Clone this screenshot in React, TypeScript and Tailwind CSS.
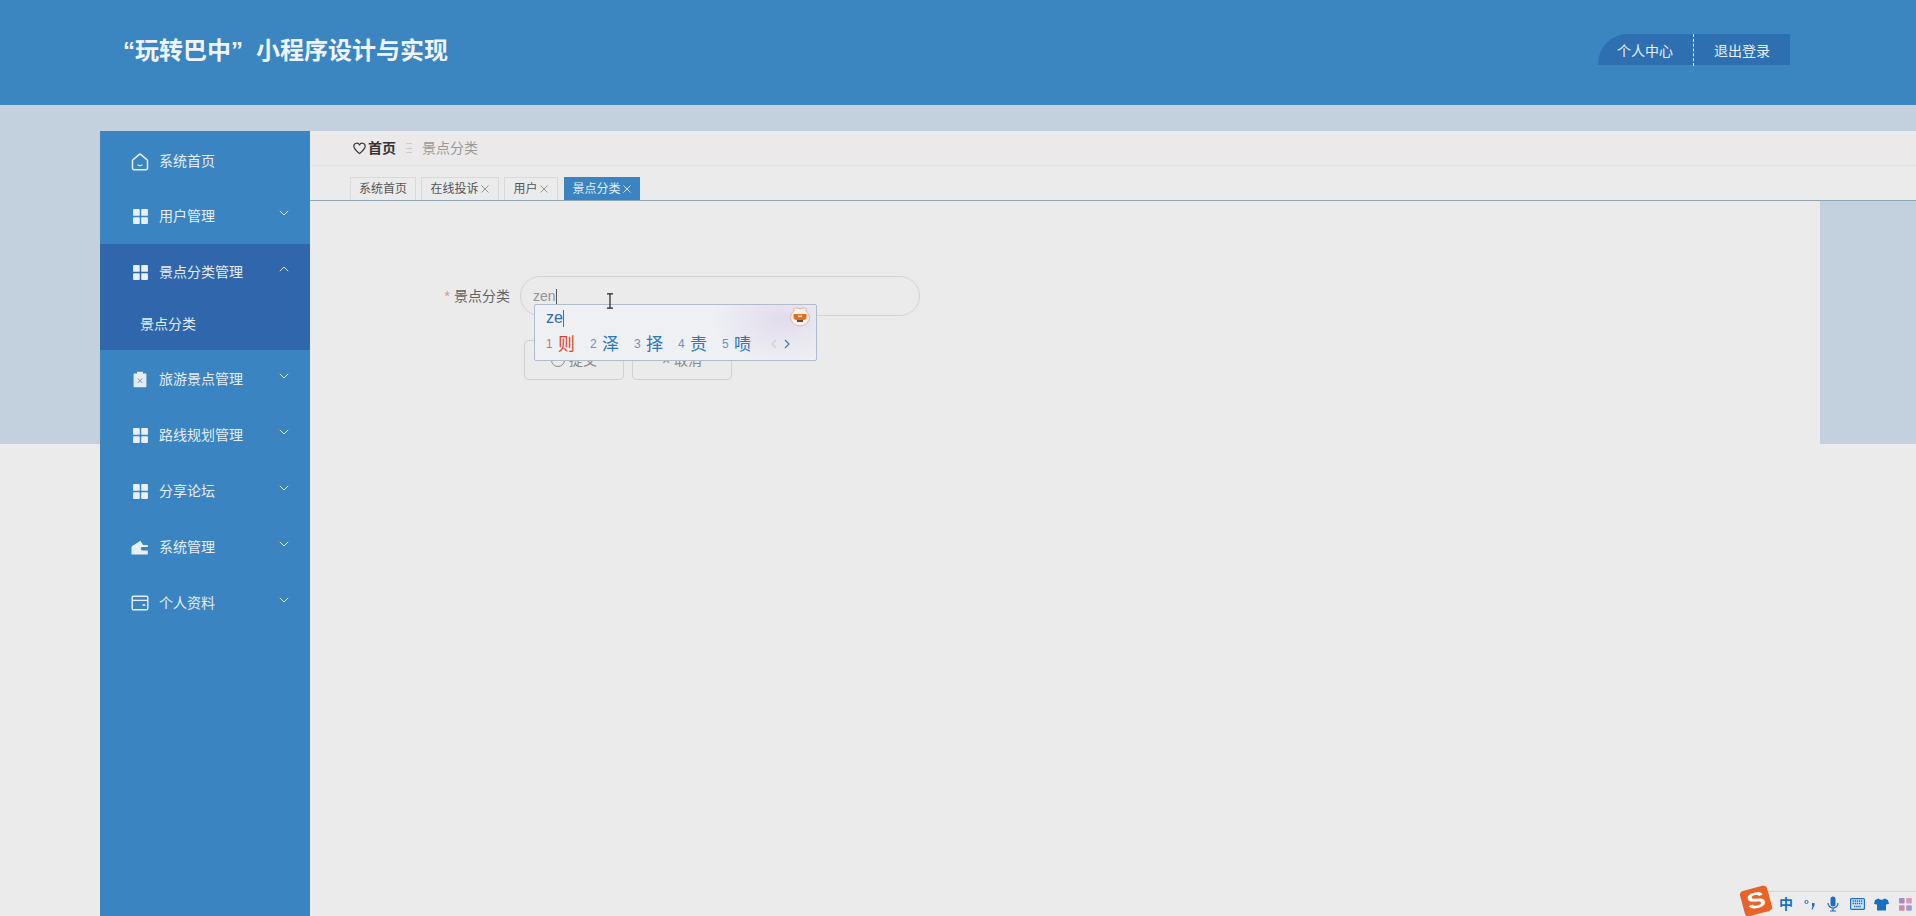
import React from "react";

const FONT = "font-['Liberation_Sans','Noto_Sans_CJK_SC',sans-serif]";

function Grid() {
  return (
    <svg width="17" height="17" viewBox="0 0 16 16" fill="#e8eff6">
      <rect x="1" y="1" width="6.3" height="6.3" rx="0.8" />
      <rect x="8.7" y="1" width="6.3" height="6.3" rx="0.8" />
      <rect x="1" y="8.7" width="6.3" height="6.3" rx="0.8" />
      <rect x="8.7" y="8.7" width="6.3" height="6.3" rx="0.8" />
    </svg>
  );
}
function Home() {
  return (
    <svg width="18" height="18" viewBox="0 0 18 18" fill="none" stroke="#e8eff6" strokeWidth="1.5" strokeLinejoin="round">
      <path d="M8 1.6 a1.5 1.5 0 0 1 2 0 L16 6.8 a1.6 1.6 0 0 1 0.5 1.2 V15 a1.8 1.8 0 0 1 -1.8 1.8 H3.3 A1.8 1.8 0 0 1 1.5 15 V8 a1.6 1.6 0 0 1 0.5 -1.2 Z" />
      <path d="M7 12 q2 1.4 4 0" strokeLinecap="round" strokeWidth="1.2" />
    </svg>
  );
}
function Clip() {
  return (
    <svg width="16" height="17" viewBox="0 0 16 17">
      <path fill="#e4ecf4" d="M5 0.8 h6 v1.7 h2.6 a0.8 0.8 0 0 1 0.8 0.8 v12.2 a0.8 0.8 0 0 1 -0.8 0.8 h-11.2 a0.8 0.8 0 0 1 -0.8 -0.8 v-12.2 a0.8 0.8 0 0 1 0.8 -0.8 H5 Z" />
      <path stroke="#6d93b8" strokeWidth="1" d="M5.8 7.5 l4.4 4.4 M10.2 7.5 l-4.4 4.4" />
    </svg>
  );
}
function Wallet() {
  return (
    <svg width="18" height="15" viewBox="0 0 18 15">
      <path fill="#e8eff6" d="M0.5 14.5 V7.5 Q0.5 6 2 5.5 L9.5 0.8 L12 5 H16.8 V7 H11.5 a1.7 1.7 0 0 0 0 3.6 H16.8 V14.5 Z" />
    </svg>
  );
}
function Card() {
  return (
    <svg width="18" height="16" viewBox="0 0 18 16" fill="none" stroke="#e8eff6" strokeWidth="1.4">
      <rect x="1.2" y="1.2" width="15.6" height="13.6" rx="1.4" />
      <path d="M1.2 5.4 H16.8 M11.5 10 h2.8" />
    </svg>
  );
}
function Chev({ up = false }: { up?: boolean }) {
  return (
    <svg width="10" height="6" viewBox="0 0 10 6" fill="none" stroke="#dfe9f3" strokeWidth="1">
      <path d={up ? "M0.8 5.2 L5 1 L9.2 5.2" : "M0.8 0.8 L5 5 L9.2 0.8"} />
    </svg>
  );
}

function Row({ icon, label, chev, up, h = "h-[56px]" }: { icon: React.ReactNode; label: string; chev?: boolean; up?: boolean; h?: string }) {
  return (
    <div className={`flex items-center pl-[31px] pr-[21px] ${h}`}>
      <span className="flex w-[18px] justify-center">{icon}</span>
      <span className="ml-[10px] flex-1 text-[14px] text-[#e6eef5]">{label}</span>
      {chev && (
        <span className="mb-[7px] flex">
          <Chev up={up} />
        </span>
      )}
    </div>
  );
}

function Tab({ label, close, active, w }: { label: string; close?: boolean; active?: boolean; w: string }) {
  return (
    <div
      className={`flex h-[23px] items-center justify-center gap-[1px] border border-b-0 text-[12px] ${w} ${
        active ? "border-[#3a84c1] bg-[#3a84c1] text-[#e6eef5]" : "border-[#d9d9d9] bg-[#ebebeb] text-[#555]"
      }`}
    >
      <span>{label}</span>
      {close && (
        <svg width="10" height="10" viewBox="0 0 10 10" fill="none" stroke={active ? "#e6eef5" : "#888"} strokeWidth="0.9">
          <path d="M1.5 1.5 L8.5 8.5 M8.5 1.5 L1.5 8.5" />
        </svg>
      )}
    </div>
  );
}

function Cand({ n, c, red }: { n: number; c: string; red?: boolean }) {
  return (
    <span className="flex w-[44px] items-center">
      <span className={`w-[12px] text-[12px] ${red ? "text-[#d9705f]" : "text-[#6a93bd]"}`}>{n}</span>
      <span className={`text-[17px] leading-none ${red ? "text-[#d8402c]" : "text-[#2b78ba]"}`}>{c}</span>
    </span>
  );
}

export default function App() {
  return (
    <div className={`relative h-[916px] overflow-hidden bg-[linear-gradient(#c3d0de_444px,#ebebeb_444px)] ${FONT}`}>
      <header className="flex h-[105px] items-center justify-between bg-[#3b85c1] pl-[123px] pr-[126px]">
        <h1 className="mb-[3px] flex text-[24px] font-bold text-[#f0f4f8]">
          <span>“玩转巴中”</span>
          <span className="ml-[13px]">小程序设计与实现</span>
        </h1>
        <div className="mb-[6px] flex h-[31px] items-center rounded-tl-[30px] bg-[#2d6fb0] text-[14px] text-[#e9f0f7]">
          <span className="flex h-[32px] w-[95px] items-center justify-end pr-[20px] pt-[3px]">个人中心</span>
          <span className="h-[32px] border-l border-dashed border-[#e9f0f7]" />
          <span className="flex w-[96px] justify-center pt-[3px]">退出登录</span>
        </div>
      </header>

      <div className="flex pl-[100px] pt-[26px]">
        <aside className="h-[785px] w-[210px] shrink-0 bg-[#3a84c1] pt-[3px]">
          <Row icon={<Home />} label="系统首页" h="h-[55px]" />
          <Row icon={<Grid />} label="用户管理" chev h="h-[55px]" />
          <div className="h-[106px] bg-[#3066ac]">
            <Row icon={<Grid />} label="景点分类管理" chev up h="h-[57px]" />
            <div className="flex h-[49px] items-center pb-[2px] pl-[40px] text-[14px] text-[#e6eef5]">景点分类</div>
          </div>
          <div className="pt-[1px]">
            <Row icon={<Clip />} label="旅游景点管理" chev />
            <Row icon={<Grid />} label="路线规划管理" chev />
            <Row icon={<Grid />} label="分享论坛" chev />
            <Row icon={<Wallet />} label="系统管理" chev />
            <Row icon={<Card />} label="个人资料" chev />
          </div>
        </aside>

        <main className="flex h-[785px] flex-1 flex-col">
          <div className="flex h-[35px] items-center border-b border-[#e2e2e2] bg-[#ebe9e9] pl-[43px] text-[14px]">
            <svg width="13" height="13" viewBox="0 0 24 24" fill="none" stroke="#333" strokeWidth="2.2" strokeLinejoin="round">
              <path d="M12 21.5 C4 15 1.5 11.5 1.5 7.5 A5.5 5.5 0 0 1 12 5.5 A5.5 5.5 0 0 1 22.5 7.5 C22.5 11.5 20 15 12 21.5 Z" />
            </svg>
            <span className="ml-[2px] font-bold text-[#333]">首页</span>
            <span className="ml-[10px] flex h-[10px] w-[6px] flex-col justify-between">
              <span className="h-px bg-[#ccc]" />
              <span className="h-px bg-[#ccc]" />
              <span className="h-px bg-[#ccc]" />
            </span>
            <span className="ml-[10px] text-[#999]">景点分类</span>
          </div>
          <div className="flex h-[35px] items-end border-b border-b-[#8fa6b9] bg-[#ebebeb] pl-[40px]">
            <Tab label="系统首页" w="w-[66px]" />
            <span className="w-[5px]" />
            <Tab label="在线投诉" close w="w-[78px]" />
            <span className="w-[5px]" />
            <Tab label="用户" close w="w-[54px]" />
            <span className="w-[6px]" />
            <Tab label="景点分类" close active w="w-[76px]" />
          </div>
          <div className="w-[1510px] flex-1 bg-[#ebebeb] pt-[75px]">
            <div className="flex h-[40px] items-center">
              <div className="w-[210px] pr-[10px] text-right text-[14px] text-[#606266]">
                <span className="mr-[4px] text-[#e88]">*</span>景点分类
              </div>
              <div className="flex h-[40px] w-[400px] items-center rounded-full border border-[#d4d4d4] pl-[12px] text-[14px] text-[#909399]">
                zen<span className="h-[15px] w-px bg-[#555]" />
              </div>
            </div>
            <div className="mt-[24px] flex gap-[8px] pl-[214px]">
              <div className="flex h-[40px] w-[100px] items-center justify-center gap-[4px] rounded-[4px] border border-[#d2d2d2] text-[14px] text-[#888]">
                <span className="h-[14px] w-[14px] rounded-full border border-[#888]" />提交
              </div>
              <div className="flex h-[40px] w-[100px] items-center justify-center gap-[4px] rounded-[4px] border border-[#d2d2d2] text-[14px] text-[#888]">
                <span>×</span>取消
              </div>
            </div>
          </div>
        </main>
      </div>

      {/* Input method candidate window */}
      <div className="absolute left-[534px] top-[304px] h-[57px] w-[283px] rounded-[2px] border border-[#aebccc] bg-[radial-gradient(ellipse_70px_45px_at_88%_25%,#e2dcec_0%,#eef0f3_100%)] pl-[11px]">
        <div className="flex h-[26px] items-center text-[16px] text-[#2e6ea8]">
          ze<span className="h-[17px] w-px bg-[#d8402c]" />
        </div>
        <div className="flex h-[26px] items-center">
          <Cand n={1} c="则" red />
          <Cand n={2} c="泽" />
          <Cand n={3} c="择" />
          <Cand n={4} c="责" />
          <Cand n={5} c="啧" />
          <svg className="ml-[4px]" width="24" height="12" viewBox="0 0 24 12" fill="none" strokeWidth="1.1">
            <path d="M6 2 L2 6 L6 10" stroke="#c9ced6" />
            <path d="M15 2 L19 6 L15 10" stroke="#3d74ab" />
          </svg>
        </div>
        <svg className="absolute right-[6px] top-[1px]" width="20" height="21" viewBox="0 0 20 21">
          <path d="M4 5 Q3 1 7 2 Q10 3.5 13 2 Q17 1 16 5 Q19.5 8 19.5 11 A9.5 9 0 0 1 0.5 11 Q0.5 8 4 5 Z" fill="#f7f2f0" stroke="#eda58c" strokeWidth="0.8" />
          <path d="M3.5 8 h13 v3 a3 3 0 0 1 -3 3 h-7 a3 3 0 0 1 -3 -3 Z" fill="#e0701f" />
          <path d="M7 14 h6 v2 h-6 Z" fill="#6e4a35" />
          <rect x="8" y="9.5" width="4" height="1.6" fill="#ffe8c0" />
        </svg>
      </div>

      {/* Text cursor */}
      <svg className="absolute left-[606px] top-[293px]" width="8" height="16" viewBox="0 0 8 16" fill="none" stroke="#222" strokeWidth="1.2">
        <path d="M1 0.8 H7 M1 15.2 H7 M4 1 V15" />
      </svg>

      {/* Input method status bar */}
      <div className="absolute bottom-0 right-0 flex h-[25px] w-[153px] items-center border-t border-[#d5d5d5] bg-[#ececec]">
        <span className="ml-[16px] text-[14px] font-bold leading-none text-[#1a6fc4]">中</span>
        <svg className="ml-[11px]" width="11" height="11" viewBox="0 0 11 11" fill="#1a6fc4">
          <circle cx="2.5" cy="3" r="1.6" fill="none" stroke="#1a6fc4" />
          <path d="M8 4 h2.5 v2.5 L8.5 10.5 H7.4 L8.6 7 H8 Z" />
        </svg>
        <svg className="ml-[12px]" width="12" height="16" viewBox="0 0 12 16">
          <rect x="3.5" y="0.5" width="5" height="10" rx="2.5" fill="#1a6fc4" />
          <path d="M1 7 a5 5 0 0 0 10 0 M6 12 V15 M3 15 H9" fill="none" stroke="#1a6fc4" strokeWidth="1.2" />
        </svg>
        <svg className="ml-[11px]" width="15" height="12" viewBox="0 0 15 12">
          <rect x="0.6" y="0.6" width="13.8" height="10.8" rx="1" fill="#d5e4f3" stroke="#1a6fc4" strokeWidth="1.2" />
          <path d="M2.5 3 h10 M2.5 5.5 h10 M4 8.5 h7" stroke="#1a6fc4" strokeWidth="1.3" strokeDasharray="1.4 0.7" />
        </svg>
        <svg className="ml-[9px]" width="15" height="13" viewBox="0 0 15 13">
          <path d="M4.5 0.5 L1 2 L0 6 L3 6.5 V12.5 H12 V6.5 L15 6 L14 2 L10.5 0.5 Q7.5 3 4.5 0.5 Z" fill="#1a6fc4" />
        </svg>
        <svg className="ml-[10px]" width="13" height="13" viewBox="0 0 13 13">
          <rect x="0" y="0" width="5.6" height="5.6" rx="1" fill="#a98ac4" />
          <rect x="7.2" y="0" width="5.6" height="5.6" rx="1" fill="#d89ab5" />
          <rect x="0" y="7.2" width="5.6" height="5.6" rx="1" fill="#d08ab0" />
          <rect x="7.2" y="7.2" width="5.6" height="5.6" rx="1" fill="#a098d0" />
        </svg>
      </div>
      <div className="absolute bottom-[2px] left-[1742px] flex h-[26px] w-[28px] -rotate-[15deg] items-center justify-center rounded-[4px] bg-[#e8622a] text-[22px] font-bold leading-none text-white">
        <span className="scale-x-125">S</span>
      </div>
    </div>
  );
}
